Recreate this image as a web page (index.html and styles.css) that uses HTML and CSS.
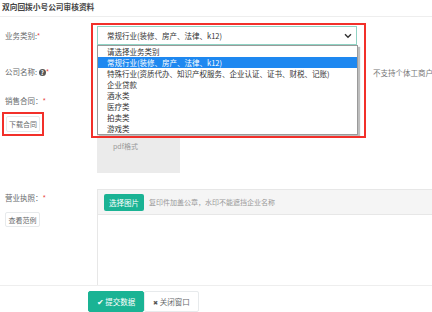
FILE: index.html
```html
<!DOCTYPE html>
<html lang="zh-CN">
<head>
    <meta charset="UTF-8">
    <meta name="viewport" content="width=device-width, initial-scale=1.0">
    <title>双向回拨小号公司审核资料</title>
    <link rel="stylesheet" href="styles.css">
</head>
<body>
    <div class="page">
        <h3 class="page-title">双向回拨小号公司审核资料</h3>
        <form class="audit-form">
            <div class="form-row row-type">
                <label class="form-label">业务类别:<i class="req">*</i></label>
                <div class="form-field">
                    <div class="select-wrap">
                        <div class="select-box">
                            <span>常规行业(装修、房产、法律、k12)</span>
                            <svg class="chevron" width="8" height="6" viewBox="0 0 8 6"><path d="M1 1.2 L4 4.2 L7 1.2" fill="none" stroke="#333" stroke-width="1.4"/></svg>
                        </div>
                        <ul class="select-list">
                            <li>请选择业务类别</li>
                            <li class="active">常规行业(装修、房产、法律、k12)</li>
                            <li>特殊行业(资质代办、知识产权服务、企业认证、证书、财税、记账)</li>
                            <li>企业贷款</li>
                            <li>酒水类</li>
                            <li>医疗类</li>
                            <li>拍卖类</li>
                            <li>游戏类</li>
                        </ul>
                        <div class="mark mark-select"></div>
                    </div>
                </div>
            </div>

            <div class="form-row row-company">
                <label class="form-label">公司名称: <span class="help">?</span><i class="req">*</i></label>
                <div class="form-field field-inline">
                    <input class="text-input" type="text">
                    <span class="note">不支持个体工商户</span>
                </div>
            </div>

            <div class="form-row row-contract">
                <div class="form-label">
                    <div>销售合同：<i class="req">*</i></div>
                    <div class="mark mark-btn"><button type="button" class="btn-small">下载合同</button></div>
                </div>
                <div class="form-field">
                    <div class="upload-box">
                        <span class="upload-ext">pdf格式</span>
                    </div>
                </div>
            </div>

            <div class="form-row row-license">
                <div class="form-label">
                    <div>营业执照：<i class="req">*</i></div>
                    <button type="button" class="btn-small btn-demo">查看范例</button>
                </div>
                <div class="form-field">
                    <div class="pic-panel">
                        <div class="pic-head">
                            <button type="button" class="btn-pick">选择图片</button>
                            <span class="pic-hint">复印件加盖公章，水印不能遮挡企业名称</span>
                        </div>
                    </div>
                </div>
            </div>

            <div class="form-footer">
                <button type="submit" class="btn btn-submit">✔ 提交数据</button>
                <button type="button" class="btn btn-close"><span class="x">✖</span> 关闭窗口</button>
            </div>
        </form>
    </div>
</body>
</html>
```

FILE: styles.css
```css
body {
    margin: 0;
    font-family: "Noto Sans CJK SC", "Noto Sans", sans-serif;
    font-size: 7.5px;
    color: #676a6c;
    background-color: #fff;
    overflow: hidden;
}
.page-title {
    margin: 0;
    padding-left: 2px;
    height: 16px;
    line-height: 14px;
    font-size: 7.7px;
    font-weight: bold;
    color: #444;
    border-bottom: 1px solid #eee;
}
.form-row {
    display: flex;
}
.form-label {
    width: 97px;
    flex-shrink: 0;
    padding-left: 5px;
    box-sizing: border-box;
}
.form-field {
    flex: 1;
}
.req {
    font-style: normal;
    color: #e8473f;
}
.row-type {
    margin-top: 9px;
}
.row-type .form-label {
    line-height: 19px;
}
.select-wrap {
    position: relative;
    width: 260px;
}
.select-box {
    height: 19px;
    box-sizing: border-box;
    border: 1px solid #8fd3c4;
    display: flex;
    align-items: center;
    justify-content: space-between;
    padding: 0 4px 0 9px;
    color: #333;
}
.select-list {
    position: absolute;
    top: 100%;
    left: 0;
    width: 261px;
    margin: 0;
    padding: 0;
    list-style: none;
    background-color: #fff;
    border: 1px solid #9a9a9a;
    box-shadow: 2px 2px 1px #bdbdbd;
    box-sizing: border-box;
    z-index: 5;
}
.select-list li {
    height: 11px;
    line-height: 11px;
    padding-left: 9px;
    color: #333;
    white-space: nowrap;
}
.select-list li.active {
    background-color: #1e88f0;
    color: #fff;
}
.mark {
    border: 2px solid #f2302a;
    box-sizing: border-box;
}
.mark-select {
    position: absolute;
    left: -6px;
    top: -3px;
    width: 275px;
    height: 115px;
    z-index: 6;
    pointer-events: none;
}
.row-company {
    margin-top: 18px;
}
.row-company .form-label {
    line-height: 18px;
}
.help {
    display: inline-block;
    width: 7px;
    height: 7px;
    line-height: 7px;
    border-radius: 50%;
    background-color: #555;
    color: #fff;
    font-size: 6px;
    font-weight: bold;
    text-align: center;
}
.field-inline {
    display: flex;
    align-items: center;
}
.text-input {
    width: 260px;
    height: 18px;
    box-sizing: border-box;
    border: 1px solid #e5e6e7;
    margin: 0;
}
.note {
    margin-left: 16px;
    color: #777;
    white-space: nowrap;
}
.row-contract {
    margin-top: 11px;
}
.row-contract .form-label > div:first-child,
.row-license .form-label > div:first-child {
    padding-top: 3px;
    line-height: 11px;
}
.mark-btn {
    display: inline-block;
    margin: 6px 0 0 -3px;
    padding: 2px;
}
.btn-small {
    display: block;
    width: 34px;
    height: 16px;
    padding: 0;
    font-family: inherit;
    font-size: 7px;
    color: #676a6c;
    background-color: #fff;
    border: 1px solid #e7eaec;
    border-radius: 2px;
}
.upload-box {
    width: 83px;
    height: 81px;
    background-color: #ebebeb;
    display: flex;
    flex-direction: column;
    padding: 0 0 0 16px;
    box-sizing: border-box;
    justify-content: flex-end;
    color: #999;
    font-size: 7px;
}
.upload-ext {
    line-height: 11px;
    margin-bottom: 21px;
}
.row-license {
    margin-top: 16px;
}
.btn-demo {
    margin-top: 9px;
    width: 35px;
    height: 15px;
}
.pic-panel {
    height: 96px;
    border: 1px solid #e7e7e7;
    border-right: none;
    border-bottom: none;
    box-sizing: border-box;
}
.pic-head {
    height: 24px;
    background-color: #f5f5f5;
    border-bottom: 1px solid #e7e7e7;
    display: flex;
    align-items: center;
    padding-left: 6px;
}
.btn-pick {
    width: 40px;
    height: 17px;
    padding: 0;
    border: none;
    border-radius: 2px;
    background-color: #1ab394;
    color: #fff;
    font-family: inherit;
    font-size: 7.5px;
}
.pic-hint {
    margin-left: 5px;
    color: #999;
    font-size: 7px;
}
.form-footer {
    border-top: 1px solid #eee;
    padding: 5px 0 0 88px;
    display: flex;
}
.btn {
    height: 21px;
    padding: 0;
    font-family: inherit;
    font-size: 7.5px;
    border-radius: 2px;
}
.btn-submit {
    width: 56px;
    background-color: #1ab394;
    border: 1px solid #1ab394;
    color: #fff;
}
.btn-close {
    width: 55px;
    background-color: #fff;
    border: 1px solid #e7eaec;
    color: #676a6c;
}
.btn-close .x {
    color: #555;
    font-size: 6px;
}
```
